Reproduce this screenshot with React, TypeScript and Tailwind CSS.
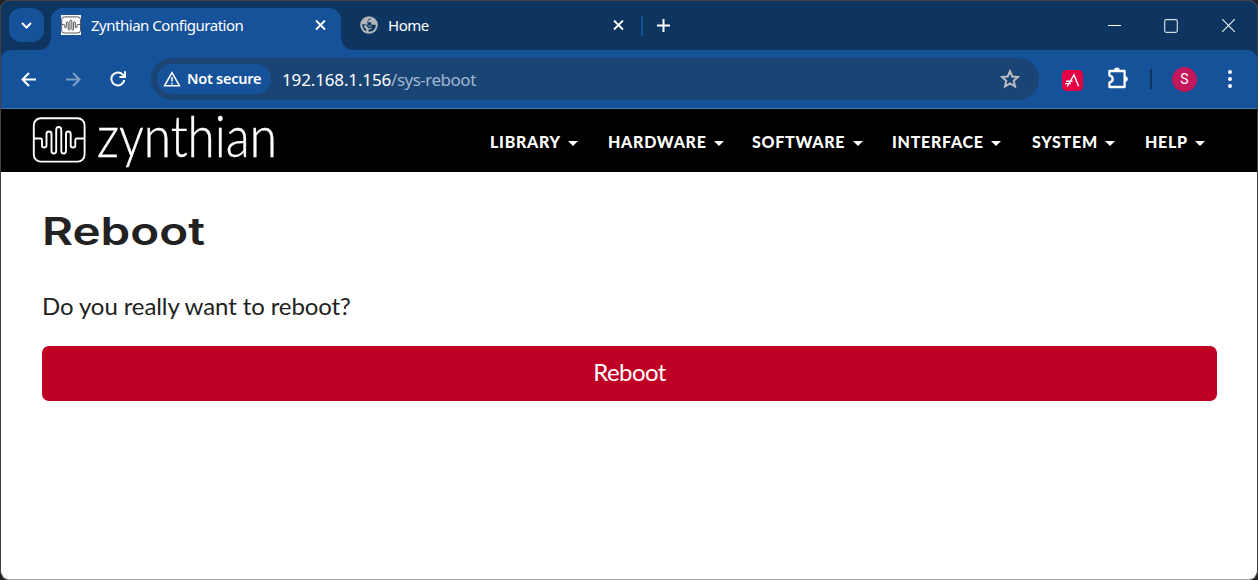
import React from "react";

const uiFont = "font-['Noto_Sans','Liberation_Sans',sans-serif]";
const pageFont = "font-['Lato','Liberation_Sans',sans-serif]";

const menus = [
  { label: "LIBRARY", width: "w-[118px]" },
  { label: "HARDWARE", width: "w-[144px]" },
  { label: "SOFTWARE", width: "w-[140px]" },
  { label: "INTERFACE", width: "w-[140px]" },
  { label: "SYSTEM", width: "w-[113px]" },
  { label: "HELP", width: "w-[60px]" },
];

function Waveform({ className, stroke, width }: { className: string; stroke: string; width: number }) {
  return (
    <svg className={className} viewBox="0 0 54 46" fill="none" stroke={stroke} strokeWidth={width}>
      <rect x="1.8" y="1.2" width="50.8" height="43.4" rx="7" />
      <path d="M2 21.5H8.7C10 21.5 10 23 10 24V28.5Q10 30.5 12.2 30.5T14.5 28.5V17Q14.5 14.5 17 14.5T19.5 17V34Q19.5 36.5 21.8 36.5T24.2 34V13Q24.2 10 26.7 10T29.3 13V34Q29.3 36.5 31.6 36.5T34 34V17Q34 14.5 36.3 14.5T38.7 17V28.5Q38.7 30.5 41 30.5T43.3 28.5V24C43.3 22 43.3 21.5 45 21.5H52.5" />
    </svg>
  );
}

function TabClose() {
  return (
    <svg className="size-[11px]" viewBox="0 0 11 11" stroke="white" strokeWidth="1.8">
      <path d="M1 .5L10 9.5M10 .5L1 9.5" />
    </svg>
  );
}

function TabStrip() {
  return (
    <div className="flex h-[49px] shrink-0 bg-[#0d355f] pt-[7px]">
      <button className="ml-2 flex h-[34px] w-[35px] items-center justify-center rounded-[12px] bg-[#15529a]">
        <svg className="h-[7px] w-[11px]" viewBox="0 0 11 7" fill="none" stroke="white" strokeWidth="2">
          <path d="M1 1L5.5 5.5L10 1" />
        </svg>
      </button>
      <div className="relative ml-[7px] flex h-[43px] w-[290px] items-start rounded-t-[12px] bg-[#15529a]">
        <svg className="absolute -left-[14px] bottom-px size-[14px]" viewBox="0 0 14 14" fill="#15529a">
          <path d="M14 0V14H0Q14 14 14 0Z" />
        </svg>
        <svg className="absolute -right-[14px] bottom-px size-[14px]" viewBox="0 0 14 14" fill="#15529a">
          <path d="M0 0V14H14Q0 14 0 0Z" />
        </svg>
        <div className="ml-[10px] mt-[7px] flex size-5 items-center justify-center bg-white">
          <Waveform className="h-[18px] w-5" stroke="#4a4545" width={2.5} />
        </div>
        <span className="ml-[10px] mt-[6px] w-[224px] whitespace-nowrap text-[15px] leading-[22px] tracking-[-0.48px]">Zynthian Configuration</span>
        <div className="mt-[12px]"><TabClose /></div>
      </div>
      <div className="flex items-start">
        <svg className="ml-[19px] mt-[8px] size-[18px]" viewBox="0 0 18 18">
          <circle cx="9" cy="9" r="8.8" fill="#b1b5ba" />
          <path d="M10.5 2.2L8 4V6.3H11.2V8.8H15.8C15.8 13 13 15.8 8.6 15.8V13.2H11.4V10.6H8.6C7.6 8.4 5.2 8.3 2.2 8.3C2.4 11.8 3.5 13.8 6.2 15.2V13.3L4.2 11.2V9.2H6.3L8.2 12H11V9.6H7.5V5.1L10.5 3.6Z" fill="#0d355f" />
        </svg>
        <span className="ml-[10px] mt-[6px] w-[225px] text-[15px] leading-[22px] tracking-[-0.48px]">Home</span>
        <div className="mt-[12px]"><TabClose /></div>
        <div className="ml-[17px] mt-[8px] h-5 w-[2px] bg-[#15529a]" />
        <svg className="ml-[14px] mt-[11px] size-[13px]" viewBox="0 0 13 13" stroke="white" strokeWidth="2">
          <path d="M6.5 0V13M0 6.5H13" />
        </svg>
      </div>
      <div className="ml-auto mr-[22px] flex items-start">
        <svg className="mt-[11px] h-[13px] w-[13px]" viewBox="0 0 13 13" stroke="white"><path d="M0 6.5H13" /></svg>
        <svg className="ml-[43px] mt-[11px] size-[14px]" viewBox="0 0 14 14" fill="none" stroke="#d4dbe2" strokeWidth="1.2"><rect x=".7" y=".7" width="12.6" height="12.6" rx="1.5" /></svg>
        <svg className="ml-[44px] mt-[11px] size-[13px]" viewBox="0 0 13 13" stroke="#e4e9ee" strokeWidth="1.2"><path d="M0 0L13 13M13 0L0 13" /></svg>
      </div>
    </div>
  );
}

function Toolbar() {
  return (
    <div className="flex h-[59px] shrink-0 items-start rounded-t-[9px] border-b border-[#4677b1] bg-[#15529a]">
      <div className="flex h-[58px] w-full items-center">
        <svg className="ml-5 size-[15px]" viewBox="0 0 15 15" fill="none" stroke="white" strokeWidth="2"><path d="M15 7.5H1.5M8 1L1.5 7.5L8 14" /></svg>
        <svg className="ml-[30px] size-[15px]" viewBox="0 0 15 15" fill="none" stroke="#7f9fc6" strokeWidth="2"><path d="M0 7.5H13.5M7 1L13.5 7.5L7 14" /></svg>
        <svg className="ml-[29px] size-4" viewBox="0 0 16 16" fill="none" stroke="white" strokeWidth="2"><path d="M14.3 9A6.5 6.5 0 1 1 12.7 3.5L15 5.8M15 .2V6H9.5" /></svg>
        <div className="ml-[25px] flex h-[42px] w-[888px] items-center rounded-full bg-[#1a4474]">
          <div className="ml-[6px] flex h-[30px] w-[114px] items-center rounded-full bg-[#15529a]">
            <svg className="ml-[6px] h-4 w-[18px]" viewBox="0 0 18 16" fill="none" stroke="white" strokeWidth="1.5"><path d="M9 1.6L16.5 14.8H1.5ZM9 6V10.5M9 11.8V13.4" /></svg>
            <span className="-mt-[2px] ml-[6px] whitespace-nowrap text-[14.5px] font-semibold leading-5 tracking-[-0.25px]">Not secure</span>
          </div>
          <span className="ml-[11px] mt-px whitespace-nowrap text-[17px] leading-6 tracking-[-0.14px]">192.168.1.156<span className="tracking-[-0.5px] text-[#9fb5d0]">/sys-reboot</span></span>
          <svg className="ml-auto mr-[19px] size-5" viewBox="0 0 20 20" fill="none" stroke="#bbbdc1" strokeWidth="2"><path d="M10 2.3L12.3 7.5L18 8L13.7 11.8L15 17.5L10 14.4L5 17.5L6.3 11.8L2 8L7.7 7.5Z" /></svg>
        </div>
        <svg className="ml-[23px] mt-[2px] size-[21px]" viewBox="0 0 21 21">
          <rect width="21" height="21" rx="4.5" fill="#e50046" />
          <path d="M4 11.2H10.5M3 13.6H9M5.2 16.5L12 4.8L16.6 16.3" fill="none" stroke="white" strokeWidth="1.4" />
        </svg>
        <svg className="ml-[24px] -mt-[2px] size-[22px]" viewBox="0 0 22 22">
          <path d="M2.4 4H17.6V20H2.4V15.7Q5.7 14.8 5.7 12T2.4 8.4Z" fill="none" stroke="white" strokeWidth="2.3" strokeLinejoin="round" />
          <path d="M7 3.5A2.9 2.9 0 0 1 12.8 3.5ZM18 9.2A2.8 2.8 0 0 1 18 14.8Z" fill="white" />
        </svg>
        <div className="ml-[21px] h-5 w-[2px] bg-[#0d355f]" />
        <div className="ml-5 flex size-[25px] items-center justify-center rounded-full bg-[#c2185b] font-['Roboto',sans-serif] text-[14px]">S</div>
        <svg className="ml-[31px] h-[18px] w-[4px]" viewBox="0 0 4 18" fill="white"><circle cx="2" cy="2" r="2" /><circle cx="2" cy="9" r="2" /><circle cx="2" cy="16" r="2" /></svg>
      </div>
    </div>
  );
}

function Navigation() {
  return (
    <nav className={`flex h-[63px] shrink-0 items-start bg-black text-white ${pageFont}`}>
      <Waveform className="ml-[31px] mt-[8px] h-[46px] w-[54px]" stroke="white" width={1.9} />
      <svg className="ml-[11px] h-[63px] w-[182px] shrink-0 overflow-visible" viewBox="0 0 182 63">
        <text x="0" y="47.5" textLength="180" lengthAdjust="spacingAndGlyphs" fill="white" stroke="white" strokeWidth=".4" fontFamily="Lato, sans-serif" fontWeight="300" fontSize="57">zynthian</text>
      </svg>
      <div className="ml-[211px] mt-[20px] flex">
        {menus.map(({ label, width }) => (
          <button key={label} className={`flex shrink-0 items-center text-left ${width}`}>
            <span className="whitespace-nowrap text-[16px] font-black leading-[26px] tracking-[0.72px]">{label}</span>
            <svg className="ml-[7.5px] mt-[3px] h-[5px] w-[10px] shrink-0" viewBox="0 0 10 5" fill="white"><path d="M0 0H10L5 5Z" /></svg>
          </button>
        ))}
      </div>
    </nav>
  );
}

export default function App() {
  return (
    <div className="h-[580px] w-[1258px] overflow-hidden bg-[#222]">
      <div className={`flex h-full flex-col overflow-hidden rounded-[9px] border border-[#404142] border-b-[#a7a7a7] bg-white text-white ${uiFont}`}>
        <header className="shrink-0 bg-[#0d355f]">
          <TabStrip />
          <Toolbar />
        </header>
        <Navigation />
        <main className={`flex flex-1 flex-col pl-[41px] pr-10 text-[#222] ${pageFont}`}>
          <h1 className="mt-[34px] h-[52px]">
            <svg className="h-[52px] w-[170px] overflow-visible" viewBox="0 0 170 52">
              <text x="0" y="39" textLength="163" lengthAdjust="spacingAndGlyphs" fill="#222" fontFamily="Inter, sans-serif" fontWeight="600" fontSize="38">Reboot</text>
            </svg>
          </h1>
          <p className="mt-[30px] whitespace-nowrap text-[24px] leading-9 tracking-[-0.1px]">Do you really want to reboot?</p>
          <button className="mt-[22px] h-[55px] shrink-0 rounded-[7px] bg-[#bf0024] pb-[4px] text-[24px] leading-9 tracking-[-0.6px] text-white">Reboot</button>
        </main>
      </div>
    </div>
  );
}
